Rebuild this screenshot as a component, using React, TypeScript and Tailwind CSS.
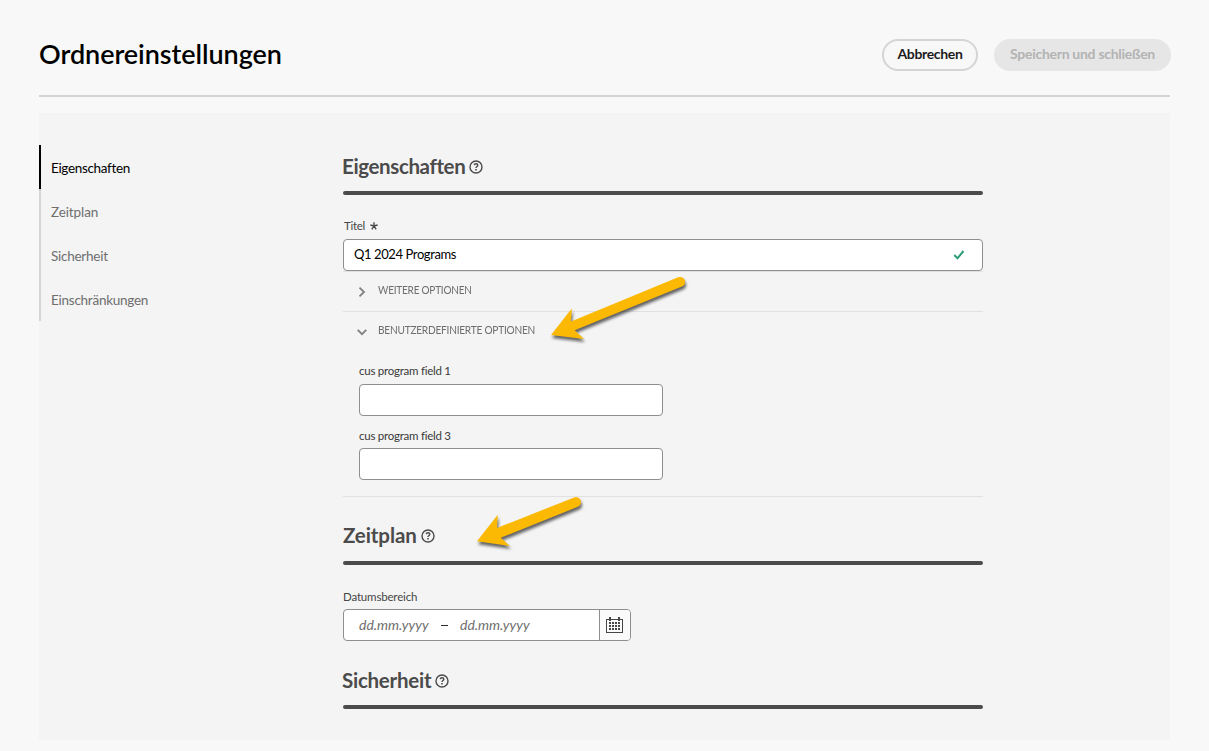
import type { ReactNode } from "react";

function HelpIcon() {
  return (
    <svg width="14" height="14" viewBox="0 0 14 14" fill="none" stroke="#4b4b4b" className="mt-px shrink-0">
      <circle cx="7" cy="7" r="6" strokeWidth="1.4" />
      <path d="M5.200 5.100C5.400 4.100 6.200 3.800 7 3.800c1.100 0 1.800.6 1.800 1.400C8.800 6.400 7 6.500 7 8" strokeWidth="1.4" />
      <path d="M7 9V10.500" strokeWidth="1.6" />
    </svg>
  );
}

function SectionHeading({ className, children }: { className: string; children: ReactNode }) {
  return (
    <div className="flex h-[46px] flex-col justify-between">
      <h2 className={`-ml-px flex items-center gap-1 text-[20.5px] font-bold text-[#4b4b4b] ${className}`}>
        {children}
        <HelpIcon />
      </h2>
      <div className="h-1 shrink-0 rounded-full bg-[#4b4b4b]" />
    </div>
  );
}

function CustomField({ label, className }: { label: string; className: string }) {
  return (
    <label className="flex w-[304px] flex-col">
      <span className={`h-[21px] text-[11.5px] leading-4 tracking-[-0.25px] text-[#3a3a3a] ${className}`}>{label}</span>
      <input className="h-8 rounded border border-[#8e8e8e] bg-white px-3 outline-none" />
    </label>
  );
}

function CalendarIcon() {
  return (
    <svg width="17" height="16" viewBox="0 0 17 16" shapeRendering="crispEdges">
      <path d="M.5 2.500H16.500V15.500H.5Z" fill="none" stroke="#464646" />
      <path d="M3 0h2v4H3zM12 0h2v4h-2z" fill="#464646" />
      <path
        d="M3 5h2v2H3zM6 5h2v2H6zM9 5h2v2H9zM12 5h2v2h-2zM3 8h2v2H3zM6 8h2v2H6zM9 8h2v2H9zM12 8h2v2h-2zM3 11h2v2H3zM6 11h2v2H6zM9 11h2v2H9zM12 11h2v2h-2z"
        fill="#464646"
      />
    </svg>
  );
}

function Arrows() {
  return (
    <svg
      className="pointer-events-none absolute top-0 left-0 drop-shadow-[1px_3px_1.5px_rgba(0,0,0,0.6)]"
      width="1209"
      height="751"
      fill="#fbb903"
    >
      <path d="M551 335L571.800 308.500L571 321.600L678.100 277.300A5 5 0 0 1 681.900 286.600L574.700 330.300L584 339Z" />
      <path d="M477 541.300L497.800 514.800L497 528L574.100 497.400A5 5 0 0 1 577.900 506.700L500.700 537.800L510 546Z" />
    </svg>
  );
}

export default function App() {
  return (
    <div className="relative h-[751px] w-[1209px] overflow-hidden bg-[#f8f8f8] pr-[39px] pl-[39px] font-['Lato','Noto_Sans',sans-serif]">
      <header className="flex h-[97px] items-start justify-between border-b-2 border-[#d5d5d5] pt-[39px]">
        <h1 className="-mt-px text-[27px] leading-[32px] font-semibold tracking-[-0.06px] text-black">
          Ordnereinstellungen
        </h1>
        <div className="-mr-px flex gap-4 text-[14px] font-bold">
          <button className="h-8 w-24 rounded-full border-2 border-[#d5d5d5] pb-1 tracking-[-0.35px] whitespace-nowrap text-[#1c1c1c]">
            Abbrechen
          </button>
          <button className="h-8 w-[177px] rounded-full bg-[#e6e6e6] pb-1 tracking-[-0.28px] whitespace-nowrap text-[#b3b3b3]">
            Speichern und schließen
          </button>
        </div>
      </header>

      <main className="mt-4 flex h-[627px] bg-[#f4f4f4] pt-8">
        <nav className="flex h-44 w-[304px] shrink-0 flex-col text-[13.5px] tracking-[-0.25px] text-[#6e6e6e]">
          <a className="flex h-11 items-center border-l-2 border-black pt-0.5 pl-2.5 tracking-[-0.33px] text-black">
            Eigenschaften
          </a>
          <a className="flex h-11 items-center border-l-2 border-[#d5d5d5] pt-0.5 pl-2.5 tracking-[-0.1px]">Zeitplan</a>
          <a className="flex h-11 items-center border-l-2 border-[#d5d5d5] pt-0.5 pl-2.5">Sicherheit</a>
          <a className="flex h-11 items-center border-l-2 border-[#d5d5d5] pt-0.5 pl-2.5">Einschränkungen</a>
        </nav>

        <div className="w-[640px] pt-1">
          <SectionHeading className="leading-[34px] tracking-[-0.37px]">Eigenschaften</SectionHeading>

          <div className="mt-[22px] flex h-[22px] items-start gap-1.5 pl-px text-[11.5px] leading-[18px] tracking-[-0.3px] text-[#464646]">
            Titel
            <svg width="8" height="8" viewBox="0 0 8 8" stroke="#464646" strokeWidth="1.300" className="-ml-px mt-[5px]">
              <path d="M4 4V.2M4 4L.4 3M4 4L7.600 3M4 4L1.800 7.400M4 4L6.200 7.400" />
            </svg>
          </div>
          <div className="flex h-8 items-center justify-between rounded border border-[#8e8e8e] bg-white pr-[17px] pl-2.5">
            <span className="text-[13px] tracking-[-0.4px] text-black">Q1 2024 Programs</span>
            <svg width="12" height="10" viewBox="0 0 12 10" fill="none" stroke="#2d9d78" strokeWidth="2">
              <path d="M1.300 5L4.500 8.300L10.500 1" />
            </svg>
          </div>
          <div className="flex h-10 items-center gap-3 border-t border-[#e1e1e1] pb-px pl-[15px] text-[11px] text-[#6e6e6e]">
            <svg width="8" height="10" viewBox="0 0 8 10" fill="none" stroke="#808080" strokeWidth="1.800" className="mt-0.5">
              <path d="M1.500 .7L6 5L1.500 9.300" />
            </svg>
            <span className="origin-left scale-x-[0.912] pb-0.5 tracking-[-0.25px]">WEITERE OPTIONEN</span>
          </div>
          <div className="h-[186px] border-y border-[#e1e1e1]">
            <div className="flex h-[38px] items-center gap-[11px] pl-3.5 text-[11px] text-[#6e6e6e]">
              <svg width="10" height="8" viewBox="0 0 10 8" fill="none" stroke="#808080" strokeWidth="1.800" className="mt-0.5">
                <path d="M.7 1.800L5 6.200L9.300 1.800" />
              </svg>
              <span className="origin-left scale-x-[0.92] pb-0.5 tracking-[-0.25px]">BENUTZERDEFINIERTE OPTIONEN</span>
            </div>
            <div className="flex flex-col gap-[11px] pt-[13px] pl-4">
              <CustomField label="cus program field 1" className="pt-0" />
              <CustomField label="cus program field 3" className="pt-px" />
            </div>
          </div>

          <div className="mt-[22px]">
            <SectionHeading className="pl-px leading-[32px] tracking-[-0.1px]">Zeitplan</SectionHeading>
          </div>
          <div className="mt-[22px] h-[22px] text-[11.5px] leading-5 tracking-[-0.17px] text-[#464646]">Datumsbereich</div>
          <div className="flex h-8 w-[288px] overflow-hidden rounded border border-[#8e8e8e] bg-white">
            <div className="flex flex-1 items-center pl-[15px] text-[14px] text-[#6e6e6e]">
              <span className="w-[70px] pb-0.5 italic">dd.mm.yyyy</span>
              <span className="mx-3 h-px w-[7px] bg-[#2c2c2c]" />
              <span className="pb-0.5 italic">dd.mm.yyyy</span>
            </div>
            <button className="flex w-[31px] items-center border-l border-[#8e8e8e] bg-[#fafafa] pl-1.5">
              <CalendarIcon />
            </button>
          </div>
          <div className="mt-[22px]">
            <SectionHeading className="leading-[34px] tracking-[-0.25px]">Sicherheit</SectionHeading>
          </div>
        </div>
      </main>
      <Arrows />
    </div>
  );
}
